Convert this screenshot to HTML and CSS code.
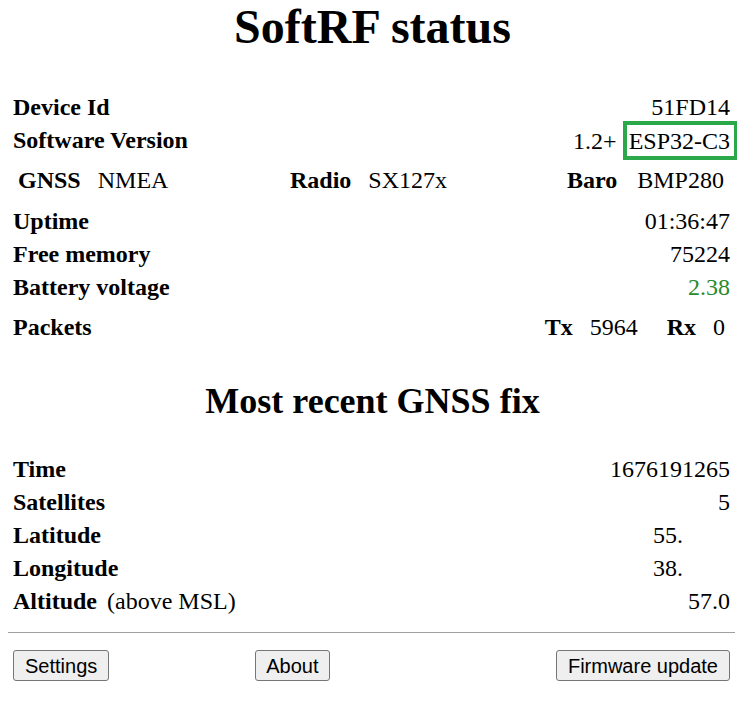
FILE: index.html
```html
<!DOCTYPE html>
<html>
<head>
<meta charset="utf-8">
<title>SoftRF status</title>
<link rel="stylesheet" href="styles.css">
</head>
<body>
<div class="page">
  <h1 class="title">SoftRF status</h1>

  <div class="group g1">
    <div class="row"><span class="lbl">Device Id</span><span class="val">51FD14</span></div>
    <div class="row"><span class="lbl">Software Version</span><span class="val">1.2+ <span class="hw">ESP32-C3</span></span></div>
  </div>

  <div class="trio g2">
    <div class="pair"><span class="lbl">GNSS</span><span class="val">NMEA</span></div>
    <div class="pair"><span class="lbl">Radio</span><span class="val">SX127x</span></div>
    <div class="pair baro"><span class="lbl">Baro</span><span class="val">BMP280</span></div>
  </div>

  <div class="group g3">
    <div class="row"><span class="lbl">Uptime</span><span class="val">01:36:47</span></div>
    <div class="row"><span class="lbl">Free memory</span><span class="val">75224</span></div>
    <div class="row"><span class="lbl">Battery voltage</span><span class="val ok">2.38</span></div>
  </div>

  <div class="row g4">
    <span class="lbl">Packets</span>
    <div class="counts">
      <span class="lbl">Tx</span><span class="val">5964</span>
      <span class="lbl rx">Rx</span><span class="val">0</span>
    </div>
  </div>

  <h2 class="subtitle">Most recent GNSS fix</h2>

  <div class="group g5">
    <div class="row"><span class="lbl">Time</span><span class="val">1676191265</span></div>
    <div class="row"><span class="lbl">Satellites</span><span class="val">5</span></div>
    <div class="row"><span class="lbl">Latitude</span><span class="val coord">55.</span></div>
    <div class="row"><span class="lbl">Longitude</span><span class="val coord">38.</span></div>
    <div class="row"><span class="lbl">Altitude <span class="note">(above MSL)</span></span><span class="val">57.0</span></div>
  </div>

  <hr class="rule">

  <div class="buttons">
    <button class="btn">Settings</button>
    <button class="btn about">About</button>
    <button class="btn fw">Firmware update</button>
  </div>
</div>
</body>
</html>
```
FILE: styles.css
```css
html, body {
  margin: 0;
  padding: 0;
  background: #ffffff;
}
body {
  margin: 0 8px;
  font-family: "Liberation Serif", "Times New Roman", serif;
  font-size: 24px;
  color: #000;
}
.page {
  padding-top: 0;
}
.title {
  margin: 0;
  font-size: 48px;
  line-height: 54px;
  font-weight: bold;
  text-align: center;
}
.row {
  display: flex;
  align-items: center;
  justify-content: space-between;
  height: 33px;
  padding: 0 7px 0 5px;
  white-space: nowrap;
}
.lbl {
  font-weight: bold;
}
.val {
  font-weight: normal;
}
.ok {
  color: #2a8a2a;
}
.hw {
  display: inline-block;
  border: 4px solid #2aa84a;
  padding: 2px 4px 1px 2px;
  line-height: 28px;
  margin-right: -8px;
}
.g1 { margin-top: 37px; }
.g2 { margin-top: 7px; }
.g3 { margin-top: 8px; }
.g4 { margin-top: 7px; }
.trio {
  display: grid;
  grid-template-columns: 272px 277px 1fr;
  align-items: center;
  height: 33px;
  padding: 0 8px 0 10px;
  white-space: nowrap;
}
.pair {
  display: flex;
  gap: 17px;
}
.pair.baro {
  gap: 20px;
}
.counts {
  display: flex;
  align-items: center;
  gap: 17px;
  margin-right: 5px;
}
.counts .rx {
  margin-left: 12px;
}
.subtitle {
  margin: 39px 0 0;
  font-size: 36px;
  line-height: 36px;
  font-weight: bold;
  text-align: center;
}
.g5 { margin-top: 34px; }
.coord {
  padding-right: 47px;
}
.note {
  font-weight: normal;
  margin-left: 4px;
}
.rule {
  margin: 14px 2px 0 0;
  border: 0;
  border-top: 1px solid #a0a0a0;
  height: 0;
}
.buttons {
  display: flex;
  align-items: center;
  margin-top: 17px;
  padding: 0 7px 0 5px;
}
.btn {
  font-family: "Liberation Sans", Arial, sans-serif;
  font-size: 20px;
  height: 31px;
  padding: 0 11px;
  border: 1px solid #767676;
  border-radius: 3px;
  background: #efefef;
  color: #000;
  line-height: 1;
}
.about {
  margin-left: 146px;
  padding: 0 10px;
}
.fw {
  margin-left: auto;
}
```
